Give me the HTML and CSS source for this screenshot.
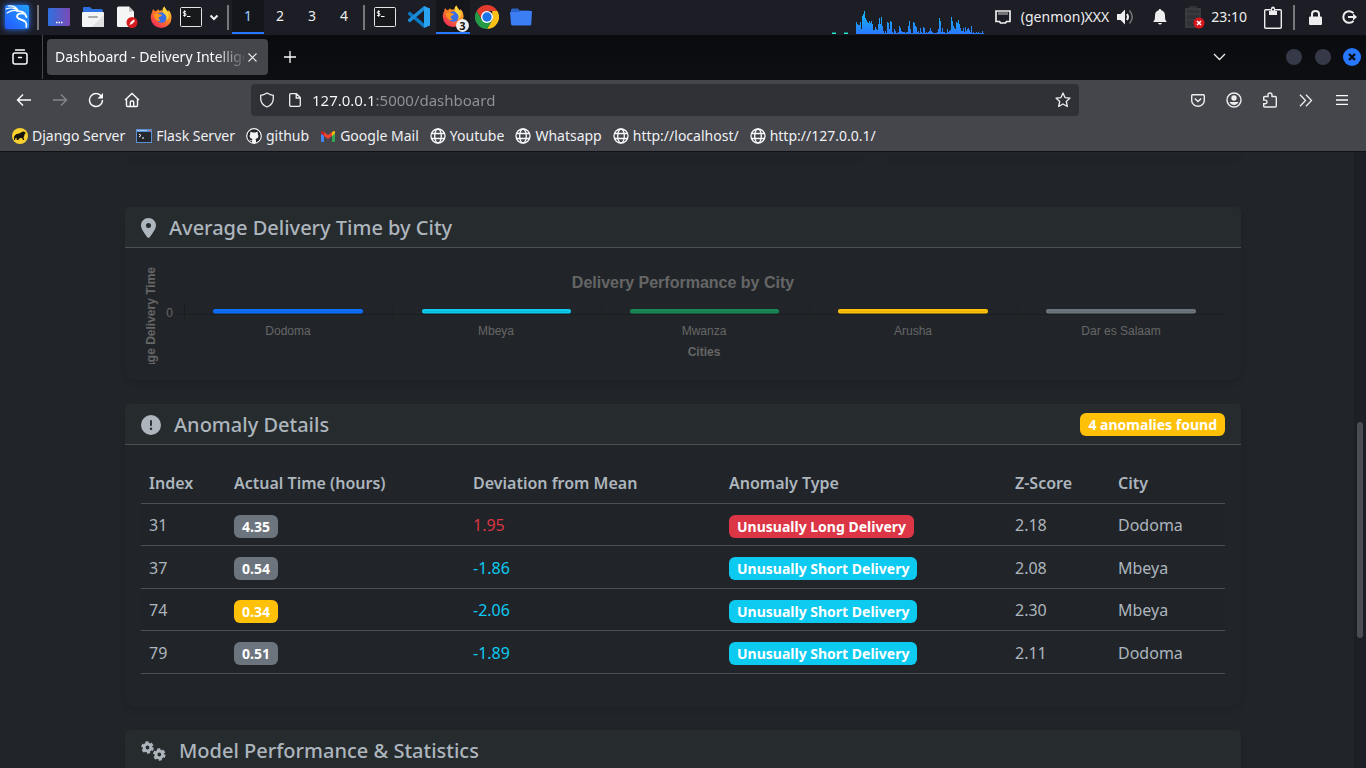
FILE: index.html
```html
<!DOCTYPE html>
<html lang="en">
<head>
<meta charset="utf-8">
<title>Dashboard - Delivery Intelligence</title>
<link rel="stylesheet" href="styles.css">
</head>
<body>
<svg class="defs" aria-hidden="true">
  <defs>
    <linearGradient id="fox" x1="1" y1="0" x2="0.2" y2="1"><stop offset="0" stop-color="#ffe14a"/><stop offset=".45" stop-color="#ff8a1f"/><stop offset="1" stop-color="#f0245c"/></linearGradient>
    <linearGradient id="kali" x1="1" y1="0" x2="0" y2="1"><stop offset="0" stop-color="#22a0ff"/><stop offset="1" stop-color="#2458ff"/></linearGradient>
    <linearGradient id="desk"><stop offset="0" stop-color="#2f6fe0"/><stop offset="1" stop-color="#7a4bb5"/></linearGradient>
    <linearGradient id="load" gradientUnits="userSpaceOnUse" x1="0" y1="0" x2="0" y2="24"><stop offset="0" stop-color="#10bff0"/><stop offset="1" stop-color="#2a78ff"/></linearGradient>
    <symbol id="firefox" viewBox="0 0 22 22">
      <path fill="url(#fox)" d="M2 6.500 3 3l2 2.200C6.500 5 7.500 4 8 3.200l1.300 1.500c1.300-.2 2.400-.1 3.200.3C12.200 3.500 12.800 1.800 14.500.5c.4 2.500 2.500 3.400 3.600 5.200l.4-1.700c1.800 2 3 4.500 3 7.300A10.300 10.300 0 0 1 .8 12C.6 10 1.200 8 2 6.500z"/>
      <circle cx="11.500" cy="11.500" r="5.200" fill="#386ee8"/>
      <path fill="#ff951f" d="M3.500 8.500c2-1.500 4.500-1.200 6-.2l2.600.4c-.2 1.700-2.400 1.500-3.200 2.400-.7 1 .1 3 2 3.800-3 .8-6.200-1-7.400-6.400z"/>
      <path fill="#ffd23c" d="M14.500.5c.4 3 4 4.700 4.200 8.500.2 3-1.200 5-2.600 6 1.300-3.600.3-6-2-7.300-1.600-1.400-1.900-4.600.4-7.200z"/>
    </symbol>
    <symbol id="terminal" viewBox="0 0 22 20">
      <rect x=".5" y=".5" width="21" height="19" rx="1" fill="#171819" stroke="#e6e6e6"/>
      <path d="M5.800 4.500H4.300q-1 0-1 1t1 1h.8q1 0 1 1t-1 1H3.200M4.700 3.300v6.500M7 9.500h3.500" fill="none" stroke="#fff"/>
    </symbol>
    <symbol id="globe" viewBox="0 0 16 16">
      <g fill="none" stroke="#fbfbfe" stroke-width="1.300"><circle cx="8" cy="8" r="7"/><ellipse cx="8" cy="8" rx="3.300" ry="7"/><path d="M1.500 5.500h13M1.500 10.500h13"/></g>
    </symbol>
  </defs>
</svg>

<header class="taskbar">
  <button class="task menu-btn" aria-label="Applications">
    <svg width="34" height="34" viewBox="0 0 34 34"><rect x="5" y="5" width="24" height="24" rx="2" fill="url(#kali)"/><g fill="none" stroke="#fff" stroke-linecap="round"><path d="M6 9c5-2 10-1 12 2M7 13c4-3 8-3 11-2M8 6c4-.5 8 1 10 4" stroke-width="1.100"/><path d="M17 11c4 0 7 1 8 3l1.500 3M25 14c-3-1-8-1-8 2.500 0 3 6 2.500 8.500 5.500 1.500 2 1 4 .8 5" stroke-width="1.700"/><path d="M17.500 16c-1 4 3 3 6 5" stroke-width="1.200"/></g></svg>
  </button>
  <span class="divider"></span>
  <button class="task" aria-label="Show desktop"><svg width="22" height="18" viewBox="0 0 22 18"><rect width="22" height="18" rx="1" fill="url(#desk)"/><path d="M8 14.500h1.500m1 0H12m1 0h1.500" stroke="#fff" stroke-width="1.500"/></svg></button>
  <button class="task" aria-label="Files"><svg width="22" height="20" viewBox="0 0 22 20"><path fill="#2f6fe0" d="M1 1q0-1 1-1h6l2 2h9q2 0 2 2v4H1z"/><rect y="5" width="22" height="15" rx="1" fill="#f4f4f4"/><path d="M22 8v12H10z" fill="#e0e0e0"/><rect x="6" y="9" width="10" height="2" rx="1" fill="#aaa"/></svg></button>
  <button class="task" aria-label="Text editor"><svg width="22" height="22" viewBox="0 0 22 22"><path fill="#f5f5f5" d="M1 2q0-1.500 1.500-1.500H13l5 5V20q0 1-1 1H2.500Q1 21 1 20z"/><path fill="#bdbdbd" d="M13 .5l5 5h-5z"/><circle cx="16" cy="16.500" r="5.500" fill="#d81b1f"/><path d="m13.500 19 1-2.500 3-3 1.500 1.500-3 3z" fill="#fff"/></svg></button>
  <button class="task" aria-label="Firefox"><svg width="22" height="22"><use href="#firefox"/></svg></button>
  <button class="task slim" aria-label="Terminal"><svg width="22" height="20"><use href="#terminal"/></svg></button>
  <button class="task tiny" aria-label="More launchers"><svg width="10" height="7" viewBox="0 0 10 7"><path d="m1.500 1.500 3.500 3.500 3.500-3.500" fill="none" stroke="#eee" stroke-width="2"/></svg></button>
  <span class="divider"></span>
  <nav class="spaces" aria-label="Workspaces">
    <button class="space current">1</button><button class="space">2</button><button class="space">3</button><button class="space">4</button>
  </nav>
  <span class="divider"></span>
  <button class="task" aria-label="Terminal window"><svg width="22" height="20"><use href="#terminal"/></svg></button>
  <button class="task" aria-label="Visual Studio Code"><svg width="22" height="22" viewBox="0 0 22 22"><path fill="#0a78c4" d="m0 7 1.800-1.500L16 17.500V22L0 8.500z"/><path fill="#1a8cd8" d="m0 15 1.800 1.500L16 4.500V0L0 13.500z"/><path fill="#2aa4f0" d="m16 0 6 2.500v17L16 22z"/></svg></button>
  <button class="task open" aria-label="Firefox, 3 windows"><svg width="22" height="22"><use href="#firefox"/></svg><span class="count">3</span></button>
  <button class="task" aria-label="Chrome"><svg width="24" height="24" viewBox="0 0 24 24"><path fill="#e33b2e" d="M1.600 6a12 12 0 0 1 20.800 0H12L7 15z"/><path fill="#fbc116" d="M22.400 6A12 12 0 0 1 12 24l5.200-9V6z"/><path fill="#259b48" d="M12 24A12 12 0 0 1 1.600 6L7 15l10 0z"/><circle cx="12" cy="12" r="6" fill="#fff"/><circle cx="12" cy="12" r="4.700" fill="#1d73e8"/></svg></button>
  <button class="task" aria-label="Folder"><svg width="22" height="18" viewBox="0 0 22 18"><path fill="#2a62c8" d="M1 2q0-1.500 1.500-1.500H8l1.500 2H19q2 0 2 2V9H1z"/><path fill="#3b7df2" d="M0 4h9l1.500-1H22l-.7 13q0 1.500-1.500 1.500h-17Q1 17.500 1 16z"/></svg></button>

  <div class="tray">
    <svg class="graph" width="152" height="24" viewBox="-24 0 152 24" shape-rendering="crispEdges"><path d="M-24 22h4v1h-4zM-12 22h4v1h-4z" fill="#167a6c"/><path d="M-24 23h4v1h-4zM-12 23h4v1h-4z" fill="#2ce6cc"/><path fill="url(#load)" d="M0 24V12h1V14h1V15h2V12h1V19h1V6h1V4h1V1h1V8h1V10h1V12h1V13h1V11h1V13h1V11h1V14h1V20h2V17h1V19h1V20h1V14h1V8h1V14h1V7h1V16h1V21h1V23h1V21h1V23h1V12h1V13h1V19h1V11h1V12h1V22h1V23h1V19h1V21h1V23h2V22h1V16h1V18h1V21h1V22h3V23h1V22h2V16h1V11h1V19h1V23h2V12h1V13h1V16h1V17h1V22h1V21h1V23h1V18h1V22h1V23h1V17h1V18h1V23h1V22h1V23h1V22h1V21h1V18h1V21h1V22h1V23h4V22h1V19h1V8h1V11h1V22h1V18h1V22h2V23h2V19h1V22h1V21h1V20h1V7h1V11h1V16h1V18h1V19h1V12h1V13h1V10h1V14h1V18h1V21h2V18h1V22h1V17h1V21h1V19h1V18h1V20h1V22h1V16h1V23h1V22h1V23h2V22h1V23h1V22h1V23h3V21h1V23h1V24z"/></svg>
    <svg class="net" width="16" height="14" viewBox="0 0 16 14"><path d="M1 1h14v10.500h-3.500L10.500 13h-5l-1-1.500H1z" fill="none" stroke="#eee" stroke-width="1.700"/><path d="M4 2v3m2-3v3m2-3v3m2-3v3m2-3v3" stroke="#ccc"/></svg>
    <span class="genmon">(genmon)XXX</span>
    <button class="tray-btn" aria-label="Volume"><svg width="18" height="18" viewBox="0 0 18 18"><path fill="#eee" d="M0 6h3.500L8 1.500v15L3.500 12H0z"/><path d="M10 6q2 3 0 6" fill="none" stroke="#eee" stroke-width="2"/><path d="M12.500 2.500q5.500 6.500 0 13" fill="none" stroke="#777" stroke-width="1.500"/></svg></button>
    <button class="tray-btn" aria-label="Notifications"><svg width="14" height="16" viewBox="0 0 14 16"><path fill="#eee" d="M7 0q1.200 0 1.200 1.300C11 2 12 4 12 6.500c0 4 .5 5 2 6.500H0c1.500-1.500 2-2.500 2-6.500C2 4 3 2 5.800 1.300 5.800.3 6 0 7 0zM5 14h4q-.5 1.500-2 1.500T5 14z"/></svg></button>
    <button class="tray-btn battery" aria-label="Battery"><svg width="20" height="23" viewBox="0 0 20 23"><path fill="#303236" d="M4 0h8v2h4v20H0V2h4z"/><path d="M1 8h14M1 14h14M1 3v18h14V3z" stroke="#404245" fill="none"/><circle cx="14" cy="17" r="5.500" fill="#d5161c"/><path d="m12 15 4 4m0-4-4 4" stroke="#fff" stroke-width="1.500"/></svg></button>
    <time class="clock">23:10</time>
    <button class="tray-btn clip" aria-label="Clipboard"><svg width="18" height="23" viewBox="0 0 18 23"><rect x=".700" y="3.700" width="16.600" height="18.600" rx="1" fill="none" stroke="#eee" stroke-width="1.400"/><path fill="#eee" d="M5 9V5h2q-.5-4.500 2-4.500T11 5h2v4z"/><circle cx="9" cy="3.500" r="1" fill="#1c1d25"/></svg></button>
    <span class="divider"></span>
    <button class="tray-btn lock" aria-label="Lock screen"><svg width="13" height="15" viewBox="0 0 13 15"><rect y="6.500" width="13" height="8.500" rx="1" fill="#eee"/><path d="M3 7V4q0-3 3.500-3T10 4v3" fill="none" stroke="#eee" stroke-width="2"/></svg></button>
    <button class="tray-btn logout" aria-label="Log out"><svg width="15" height="14" viewBox="0 0 15 14"><path d="M11.500 3.200a5.800 5.800 0 1 0 0 7.600" fill="none" stroke="#eee" stroke-width="2"/><path d="M6 7h6" stroke="#eee" stroke-width="2"/><path fill="#eee" d="M11 3.500 15 7l-4 3.500z"/></svg></button>
  </div>
</header>

<div class="tabstrip">
  <button class="side" aria-label="Firefox view"><svg width="16" height="16" viewBox="0 0 16 16"><g fill="none" stroke="#fbfbfe" stroke-linecap="round"><path d="M3.500 1h9" stroke-width="1.300"/><path d="M1 6q0-2 2-2h10q2 0 2 2v7q0 2-2 2H3q-2 0-2-2z" stroke-width="1.500"/><path d="M6.500 8.500h3" stroke-width="1.500"/></g></svg></button>
  <div class="tab"><span class="tab-title">Dashboard - Delivery Intelligence</span><button class="close" aria-label="Close tab"><svg width="9" height="9" viewBox="0 0 9 9"><path d="m.5.5 8 8m0-8-8 8" stroke="#eee" stroke-width="1.100"/></svg></button></div>
  <button class="newtab" aria-label="New tab"><svg width="12" height="12" viewBox="0 0 12 12"><path d="M6 0v12M0 6h12" stroke="#fbfbfe" stroke-width="1.300"/></svg></button>
  <div class="window-controls">
    <button class="all-tabs" aria-label="List all tabs"><svg width="13" height="8" viewBox="0 0 13 8"><path d="m1 1 5.500 5.500L12 1" fill="none" stroke="#eee" stroke-width="1.300"/></svg></button>
    <button class="dot" aria-label="Minimize"></button>
    <button class="dot" aria-label="Maximize"></button>
    <button class="dot shut" aria-label="Close window"><svg width="8" height="8" viewBox="0 0 8 8"><path d="m1 1 6 6m0-6L1 7" stroke="#0c0d12" stroke-width="2.400"/></svg></button>
  </div>
</div>

<div class="navbar">
  <button class="nav" aria-label="Back"><svg width="16" height="14" viewBox="0 0 16 14"><path d="M7 1.500 1.500 7 7 12.500M1.500 7H15" fill="none" stroke="#fbfbfe" stroke-width="1.400"/></svg></button>
  <button class="nav" aria-label="Forward"><svg width="16" height="14" viewBox="0 0 16 14"><path d="M9 1.500 14.500 7 9 12.500M14.500 7H1" fill="none" stroke="#85868b" stroke-width="1.400"/></svg></button>
  <button class="nav" aria-label="Reload"><svg width="16" height="16" viewBox="0 0 16 16"><path d="M14 5.500A6.500 6.500 0 1 0 14.500 8" fill="none" stroke="#fbfbfe" stroke-width="1.400"/><path d="M15 1v5.500H9.500z" fill="#fbfbfe"/></svg></button>
  <button class="nav" aria-label="Home"><svg width="16" height="16" viewBox="0 0 16 16"><path d="M1 8 8 1.500 15 8M2.500 7v6.500q0 1 1 1h9q1 0 1-1V7M6.300 14.500V10q0-1 1-1h1.400q1 0 1 1v4.500" fill="none" stroke="#fbfbfe" stroke-width="1.400"/></svg></button>
  <div class="urlbar">
    <svg width="16" height="16" viewBox="0 0 16 16"><path d="M8 1q3.500 2.200 6.300 2.300v3.200Q14.300 12.500 8 15 1.700 12.500 1.700 6.500V3.300Q4.500 3.200 8 1z" fill="none" stroke="#eee" stroke-width="1.300"/></svg>
    <svg class="pageicon" width="12" height="14" viewBox="0 0 12 14"><path d="M.7 2q0-1.300 1.300-1.300h5.500L11.300 4.500V12q0 1.300-1.300 1.300H2Q.7 13.300.7 12zM7.200 1v4h4" fill="none" stroke="#eee" stroke-width="1.300"/></svg>
    <input class="address" type="text" aria-label="Address" value="127.0.0.1:5000/dashboard">
    <button class="star" aria-label="Bookmark this page"><svg width="16" height="16" viewBox="0 0 16 16"><path d="m8 1 2 4.600 5 .5-3.700 3.400 1 5L8 12l-4.300 2.500 1-5L1 6.100l5-.5z" fill="none" stroke="#eee" stroke-width="1.300" stroke-linejoin="round"/></svg></button>
  </div>
  <button class="nav" aria-label="Save to Pocket"><svg width="14" height="13" viewBox="0 0 14 13"><path d="M1.700.7h10.600q1 0 1 1V6.500a6.300 5.800 0 0 1-12.600 0V1.700q0-1 1-1z" fill="none" stroke="#eee" stroke-width="1.400"/><path d="m3.800 4.500 3.200 3 3.200-3" fill="none" stroke="#eee" stroke-width="1.500"/></svg></button>
  <button class="nav" aria-label="Account"><svg width="16" height="16" viewBox="0 0 16 16"><circle cx="8" cy="8" r="7" fill="none" stroke="#eee" stroke-width="1.400"/><circle cx="8" cy="6" r="2.700" fill="#eee"/><path d="M3.500 10h9Q11 13 8 13t-4.500-3z" fill="#eee"/></svg></button>
  <button class="nav" aria-label="Extensions"><svg width="14" height="16" viewBox="0 0 14 16"><path d="M.7 5.500q0-1 1-1H5V3a2 2 0 0 1 4 0v1.500h3.300q1 0 1 1V14q0 1-1 1H1.700q-1 0-1-1v-2.300h1.500a1.700 1.700 0 0 0 0-3.600H.7z" fill="none" stroke="#eee" stroke-width="1.400"/></svg></button>
  <button class="nav" aria-label="More tools"><svg width="14" height="13" viewBox="0 0 14 13"><path d="M1 .7 6.500 6.500 1 12.300M7 .7l5.500 5.800L7 12.300" fill="none" stroke="#eee" stroke-width="1.300"/></svg></button>
  <button class="nav" aria-label="Menu"><svg width="12" height="10" viewBox="0 0 12 10"><path d="M0 .7h12M0 5h12M0 9.300h12" stroke="#fbfbfe" stroke-width="1.300"/></svg></button>
</div>

<nav class="bookmarks" aria-label="Bookmarks">
  <a href="#"><svg width="16" height="16" viewBox="0 0 16 16"><circle cx="8" cy="8" r="8" fill="#f8d12f"/><path fill="#15130d" d="M2 9q1-3 4-3.200 2-.2 3-1.300 1.500-1.300 3.300-.8L13.800 5l-1.300 1.200q0 2-1 3.300l.8 2.500H11l-1-2-2.500.3L6.300 12H4.500l.3-2L3 10.500 3.200 12H2z"/></svg>Django Server</a>
  <a href="#"><svg width="16" height="14" viewBox="0 0 16 14"><rect width="16" height="14" fill="#5b8fd0"/><rect x="1" y="3" width="14" height="10" fill="#24272c"/><path d="M1 1.500h10" stroke="#9fc4ef"/><path d="M13 1.500h2" stroke="#e55"/><path d="m3 5 2 1.500L3 8m3 1h2" fill="none" stroke="#fff"/></svg>Flask Server</a>
  <a href="#"><svg width="16" height="16" viewBox="0 0 16 16"><circle cx="8" cy="8" r="8" fill="#24262b"/><circle cx="8" cy="8" r="7.300" fill="none" stroke="#f4f4f4" stroke-width="1.200"/><path fill="#f4f4f4" d="M6 15v-2.200c-1.900.4-2.300-.8-2.800-1.300.9-.3 1.400.8 2 .8q.5 0 .9-.3.100-.7.500-1C4.400 10.700 3.600 9.500 3.600 8q0-1.100.7-1.900-.3-1.200.2-2.400 1.200.1 2.100.9 1.400-.3 2.800 0 .9-.8 2.100-.9.500 1.200.2 2.400.7.800.7 1.900c0 1.500-.8 2.700-3 3q.6.500.6 1.500V15z"/></svg>github</a>
  <a href="#"><svg width="16" height="12" viewBox="0 0 16 12"><path fill="#4285f4" d="M1 3v8q0 1 1 1h2V5z"/><path fill="#34a853" d="M15 3v8q0 1-1 1h-2V5z"/><path fill="#ea4335" d="M4 2v4l4 3 4-3V2L8 5z"/><path fill="#c5221f" d="M1 2q0-2 3 0v4L1 3.500z"/><path fill="#fbbc04" d="M15 2q0-2-3 0v4l3-2.500z"/></svg>Google Mail</a>
  <a href="#"><svg width="16" height="16"><use href="#globe"/></svg>Youtube</a>
  <a href="#"><svg width="16" height="16"><use href="#globe"/></svg>Whatsapp</a>
  <a href="#"><svg width="16" height="16"><use href="#globe"/></svg>http://localhost/</a>
  <a href="#"><svg width="16" height="16"><use href="#globe"/></svg>http://127.0.0.1/</a>
</nav>

<div class="viewport">
  <main class="container">
    <div class="row"><div class="card tail"></div><div class="card tail"></div></div>

    <section class="card">
      <div class="card-header">
        <h2><svg width="15" height="20" viewBox="0 0 384 512"><path fill="currentColor" d="M215.700 499.200C267 435 384 279.400 384 192 384 86 298 0 192 0S0 86 0 192c0 87.400 117 243 168.300 307.200 12.300 15.300 35.100 15.300 47.400 0zM192 128a64 64 0 1 1 0 128 64 64 0 1 1 0-128z"/></svg>Average Delivery Time by City</h2>
      </div>
      <div class="card-body">
        <svg class="chart" viewBox="0 0 1084 100" role="img" aria-label="Delivery Performance by City">
          <text class="chart-title" x="542" y="24">Delivery Performance by City</text>
          <text class="axis-title y-title" transform="translate(14 3) rotate(-90)">Average Delivery Time</text>
          <text class="tick zero" x="32" y="53">0</text>
          <g class="grid" shape-rendering="crispEdges"><path d="M36 50h1048"/><path d="M43 39v18" /><path class="faint" d="M251 39v18M460 39v18M668 39v18M876 39v18"/></g>
          <g stroke-width="2" fill-opacity=".8">
            <rect x="73" y="46" width="148" height="2.500" rx="1" fill="#0d6efd" stroke="#0d6efd"/>
            <rect x="282" y="46" width="147" height="2.500" rx="1" fill="#0dcaf0" stroke="#0dcaf0"/>
            <rect x="490" y="46" width="147" height="2.500" rx="1" fill="#198754" stroke="#198754"/>
            <rect x="698" y="46" width="148" height="2.500" rx="1" fill="#ffc107" stroke="#ffc107"/>
            <rect x="906" y="46" width="148" height="2.500" rx="1" fill="#6c757d" stroke="#6c757d"/>
          </g>
          <g class="tick"><text x="147" y="71">Dodoma</text><text x="355" y="71">Mbeya</text><text x="563" y="71">Mwanza</text><text x="772" y="71">Arusha</text><text x="980" y="71">Dar es Salaam</text></g>
          <text class="axis-title" x="563" y="92">Cities</text>
        </svg>
      </div>
    </section>

    <section class="card">
      <div class="card-header">
        <h2><svg width="20" height="20" viewBox="0 0 512 512"><path fill="currentColor" d="M256 512A256 256 0 1 0 256 0a256 256 0 1 0 0 512zm0-384c13.300 0 24 10.700 24 24v112c0 13.300-10.700 24-24 24s-24-10.700-24-24V152c0-13.300 10.700-24 24-24zm-32 224a32 32 0 1 1 64 0 32 32 0 1 1-64 0z"/></svg>Anomaly Details</h2>
        <span class="badge warning">4 anomalies found</span>
      </div>
      <div class="card-body">
        <table>
          <thead><tr><th class="col-index">Index</th><th class="col-time">Actual Time (hours)</th><th class="col-deviation">Deviation from Mean</th><th class="col-type">Anomaly Type</th><th class="col-score">Z-Score</th><th>City</th></tr></thead>
          <tbody>
            <tr><td>31</td><td><span class="badge">4.35</span></td><td class="over">1.95</td><td><span class="badge danger">Unusually Long Delivery</span></td><td>2.18</td><td>Dodoma</td></tr>
            <tr><td>37</td><td><span class="badge">0.54</span></td><td class="under">-1.86</td><td><span class="badge info">Unusually Short Delivery</span></td><td>2.08</td><td>Mbeya</td></tr>
            <tr><td>74</td><td><span class="badge warning">0.34</span></td><td class="under">-2.06</td><td><span class="badge info">Unusually Short Delivery</span></td><td>2.30</td><td>Mbeya</td></tr>
            <tr><td>79</td><td><span class="badge">0.51</span></td><td class="under">-1.89</td><td><span class="badge info">Unusually Short Delivery</span></td><td>2.11</td><td>Dodoma</td></tr>
          </tbody>
        </table>
      </div>
    </section>

    <section class="card">
      <div class="card-header">
        <h2><svg width="25" height="20" viewBox="0 0 25 20"><g fill="none" stroke="currentColor"><circle cx="6.500" cy="6.500" r="3.400" stroke-width="3"/><circle cx="6.500" cy="6.500" r="5.300" stroke-width="2" stroke-dasharray="3.100 2.450"/><circle cx="18.300" cy="13.500" r="3.400" stroke-width="3"/><circle cx="18.300" cy="13.500" r="5.300" stroke-width="2" stroke-dasharray="3.100 2.450"/></g></svg>Model Performance &amp; Statistics</h2>
      </div>
      <div class="card-body"></div>
    </section>
  </main>
  <div class="scrollbar"><div class="thumb"></div></div>
</div>
</body>
</html>
```

FILE: styles.css
```css
* { box-sizing: border-box; }

body {
  margin: 0;
  height: 100vh;
  display: flex;
  flex-direction: column;
  overflow: hidden;
  background: #212529;
  color: #adb5bd;
  font: 16px/24px "Noto Sans", "Open Sans", sans-serif;
}

button {
  padding: 0;
  border: 0;
  background: none;
  color: inherit;
  font: inherit;
}

svg { display: block; flex: none; }
.defs { position: absolute; width: 0; height: 0; }

/* Desktop panel */
.taskbar {
  flex: none;
  display: flex;
  align-items: center;
  height: 35px;
  padding-bottom: 1px;
  background: #1c1d25;
  color: #eee;
  font-size: 14px;
}

.task {
  position: relative;
  display: grid;
  place-items: center;
  width: 34px;
  height: 34px;
}
.menu-btn svg { filter: drop-shadow(0 0 3px #2a78ff); }
.task.slim { width: 26px; }
.task.tiny { width: 20px; }
.task.open { background: #15161b; border-bottom: 2px solid #2777ff; }

.divider {
  flex: none;
  width: 2px;
  height: 25px;
  margin: 0 3px;
  background: #77787c;
}

.count {
  position: absolute;
  right: 1px;
  bottom: 0;
  width: 13px;
  height: 13px;
  border-radius: 50%;
  background: #eee;
  color: #111;
  font-size: 11px;
  font-weight: 700;
  line-height: 13px;
}

.spaces { display: flex; }
.space { width: 32px; height: 34px; border-bottom: 2px solid transparent; }
.space.current { background: #15161b; border-color: #2777ff; color: #9fd0ff; }

.tray { display: flex; align-items: center; height: 34px; margin-left: auto; padding-right: 9px; }
.graph { align-self: flex-end; margin-right: 11px; }
.net { margin-right: 10px; }
.tray-btn { margin-left: 18px; }
.genmon + .tray-btn { margin-left: 8px; }
.clock { margin-left: 6px; }
.tray-btn.clip { margin: 0 8px 0 17px; }
.tray-btn.lock { margin-left: 11px; }
.tray-btn.logout { margin-left: 20px; }

/* Browser tabs */
.tabstrip {
  flex: none;
  display: flex;
  align-items: center;
  height: 45px;
  padding-bottom: 1px;
  background: linear-gradient(#0a0b0e, #0e0f13);
  color: #fbfbfe;
}
.side {
  display: grid;
  place-items: center;
  width: 43px;
  height: 44px;
  padding-right: 2px;
  border-right: 1px solid #45474d;
}
.tab {
  display: flex;
  align-items: center;
  width: 221px;
  height: 36px;
  margin: 0 16px 0 4px;
  padding: 0 11px 0 8px;
  border-radius: 4px;
  background: #44464c;
}
.tab-title {
  flex: 1;
  overflow: hidden;
  white-space: nowrap;
  font-size: 14px;
  mask-image: linear-gradient(90deg, #000 160px, transparent 192px);
}
.close { margin-left: 4px; }
.window-controls { display: flex; align-items: center; gap: 13px; margin-left: auto; padding-right: 5px; }
.all-tabs { margin-right: 47px; }
.dot {
  display: grid;
  place-items: center;
  width: 16px;
  height: 16px;
  border-radius: 50%;
  background: #363a48;
}
.dot.shut { width: 18px; height: 18px; margin-left: -1px; background: #2777ff; }

/* Navigation */
.navbar {
  flex: none;
  display: flex;
  align-items: center;
  height: 40px;
  padding: 0 6px;
  background: #44464c;
}
.nav { display: grid; place-items: center; width: 36px; height: 36px; }
.urlbar {
  flex: 1;
  display: flex;
  align-items: center;
  height: 32px;
  margin: 0 101px;
  padding: 0 8px;
  border-radius: 4px;
  background: #303136;
}
.pageicon { margin: 0 11px 0 14px; }
.address {
  flex: 1;
  min-width: 0;
  padding: 0;
  border: 0;
  outline: 0;
  background: linear-gradient(90deg, #fbfbfe 63px, #929398 63px);
  background-clip: text;
  color: transparent;
  font: inherit;
  font-size: 15px;
}

.bookmarks {
  flex: none;
  display: flex;
  align-items: center;
  gap: 11px;
  height: 32px;
  padding: 0 12px;
  border-bottom: 1px solid #111215;
  background: #44464c;
  font-size: 14px;
}
.bookmarks a {
  display: flex;
  align-items: center;
  gap: 4px;
  color: #f0f0f3;
  text-decoration: none;
  white-space: nowrap;
}

/* Dashboard */
.viewport { position: relative; flex: 1; min-height: 0; overflow: hidden; }
.container { max-width: 1140px; margin: 0 auto; padding: 0 12px; }
.row { display: grid; grid-template-columns: 736fr 356fr; gap: 24px; margin-bottom: 27px; }

.card {
  margin-bottom: 24px;
  border-radius: 10px;
  background: #212529;
  box-shadow: 0 4px 6px rgba(0, 0, 0, .1);
}
.card.tail { height: 4px; border-radius: 0 0 10px 10px; }
.card-header {
  display: flex;
  align-items: center;
  justify-content: space-between;
  padding: 9px 16px 7px;
  border-bottom: 1px solid #495057;
  border-radius: 5px 5px 0 0;
  background: #262b2e;
}
.card-header h2 {
  display: flex;
  align-items: center;
  gap: 13px;
  margin: 0;
  font-size: 20px;
  font-weight: 500;
  line-height: 24px;
}
.card-header .badge { margin: -4px 0 -2px; }
.card-body { padding: 16px; }

.chart {
  width: 100%;
  overflow: hidden;
  fill: #666;
  font-family: "Liberation Sans", Arial, sans-serif;
  font-size: 12px;
  text-anchor: middle;
}
.chart-title { font-size: 16px; font-weight: 700; }
.axis-title { font-weight: 700; }
.y-title, .zero { text-anchor: end; }
.grid { fill: none; stroke: #1b1e21; }
.faint { stroke: #1e2225; }

table { width: 100%; margin-bottom: 16px; border-spacing: 0; table-layout: fixed; }
.col-index { width: 85px; }
.col-time { width: 239px; }
.col-deviation { width: 256px; }
.col-type { width: 286px; }
.col-score { width: 103px; }
th, td {
  height: 42px;
  padding: 1px 8px 0;
  border-bottom: 1px solid #495057;
  text-align: left;
  vertical-align: middle;
}
th { height: 43px; padding-top: 2px; font-weight: 600; }
tr:nth-child(even) td { height: 43px; }
tbody tr:nth-child(odd) { background: #202327; }
.over { color: #dc3545; }
.under { color: #0dcaf0; }

.badge {
  display: inline-block;
  padding: 0 8px;
  border-radius: 6px;
  background: #6c757d;
  color: #fff;
  font-size: 14px;
  font-weight: 700;
  line-height: 23px;
  vertical-align: middle;
}
.warning { background: #ffc107; }
.danger { background: #dc3545; }
.info { background: #0dcaf0; }

.scrollbar {
  position: absolute;
  inset: 0 0 0 auto;
  width: 12px;
  padding: 0 3px;
  background: #1c1f26;
}
.thumb { height: 35%; margin-top: 270px; border-radius: 3px; background: #4b4d55; }
```
